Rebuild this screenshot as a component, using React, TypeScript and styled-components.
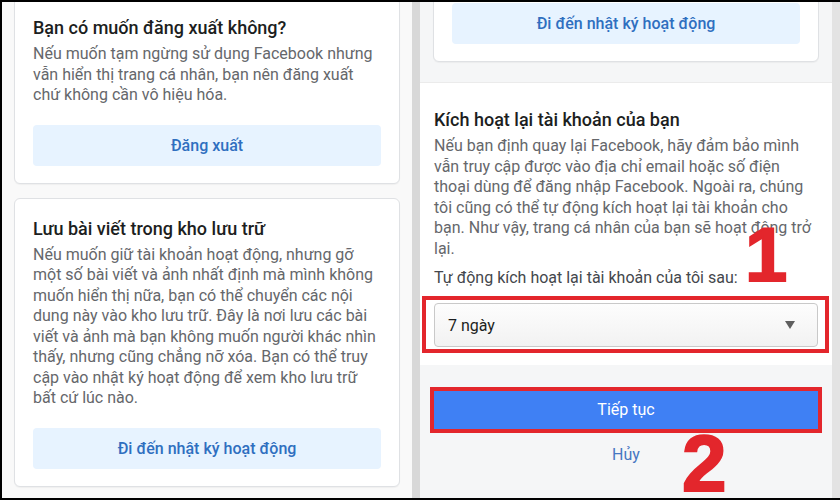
import React from 'react';
import styled, { createGlobalStyle } from 'styled-components';

const GlobalStyle = createGlobalStyle`
  html, body {
    margin: 0;
    padding: 0;
    background: #000;
  }
  body {
    font-family: Roboto, "Noto Sans", "Liberation Sans", sans-serif;
  }
`;

const Frame = styled.div`
  box-sizing: border-box;
  display: flex;
  width: 840px;
  height: 500px;
  overflow: hidden;
  border-top: 2px solid #000;
  border-bottom: 2px solid #000;
  border-left: 2px solid #000;
`;

const LeftPane = styled.div`
  display: flex;
  flex-direction: column;
  gap: 14px;
  width: 410px;
  padding: 0 12px;
  box-sizing: border-box;
  background: #f9f9f9;
  overflow: hidden;
`;

const Divider = styled.div`
  width: 8px;
  flex-shrink: 0;
  background: #d8d8d8;
`;

const RightPane = styled.div`
  position: relative;
  display: flex;
  flex-direction: column;
  width: 412px;
  flex-shrink: 0;
  background: #f5f6f7;
  overflow: hidden;
`;

const EdgeStrip = styled.div`
  flex: 1;
  background: #e3e3e3;
`;

const Card = styled.div<{ $offset?: number }>`
  flex-shrink: 0;
  margin-top: ${(p) => p.$offset ?? 0}px;
  padding: 18px 18px 17px;
  background: #fff;
  border: 1px solid #dfe1e4;
  border-radius: 6px;
  box-shadow: 0 1px 1px rgba(0, 0, 0, 0.04);
`;

const TopCard = styled(Card)`
  margin-left: 13px;
  margin-right: 13px;
`;

const Title = styled.div`
  font-size: 18px;
  line-height: 24px;
  font-weight: 500;
  color: #1c1e21;
  margin-bottom: 4px;
  white-space: nowrap;
`;

const Body = styled.div`
  font-size: 16px;
  line-height: 20.5px;
  color: #65676b;
  white-space: nowrap;
`;

const SoftButton = styled.div`
  display: flex;
  align-items: center;
  justify-content: center;
  height: 41px;
  margin-top: 19px;
  background: #e7f3ff;
  border-radius: 4px;
  font-size: 16px;
  font-weight: 500;
  color: #2f6fc0;
`;

const TopCardButton = styled(SoftButton)`
  margin-top: 0;
`;

const Section = styled.div`
  margin-top: 20px;
  padding: 25px 14px 18px;
  background: #fff;
  border-top: 1px solid #ebebeb;
`;

const Label = styled.div`
  margin-top: 9px;
  font-size: 16px;
  line-height: 20.5px;
  color: #44474c;
`;

const Highlight = styled.div<{ $inset: string }>`
  position: relative;

  &::after {
    content: '';
    position: absolute;
    inset: ${(p) => p.$inset};
    border: 4px solid #e3262c;
    pointer-events: none;
  }
`;

const SelectBox = styled.div`
  display: flex;
  align-items: center;
  justify-content: space-between;
  box-sizing: border-box;
  height: 44px;
  margin-top: 14.5px;
  padding: 0 22px 0 13px;
  background: linear-gradient(#fdfdfd, #f2f2f2);
  border: 1px solid #c9c9c9;
  border-radius: 4px;
  font-size: 16px;
  color: #1c1e21;
`;

const Caret = styled.span`
  width: 0;
  height: 0;
  border-left: 5px solid transparent;
  border-right: 5px solid transparent;
  border-top: 8px solid #5f5f5f;
`;

const Footer = styled.div`
  display: flex;
  flex-direction: column;
  padding: 24px 14px 0;
`;

const PrimaryButton = styled.div`
  display: flex;
  align-items: center;
  justify-content: center;
  height: 41px;
  background: #3f80f4;
  color: #fff;
  font-size: 16px;
`;

const CancelLink = styled.div`
  margin-top: 15px;
  text-align: center;
  font-size: 16px;
  line-height: 20px;
  color: #4677c2;
`;

const StepNumber = styled.span<{ $left: number; $top: number; $size: number }>`
  position: absolute;
  left: ${(p) => p.$left}px;
  top: ${(p) => p.$top}px;
  font-family: "Liberation Sans", Arial, sans-serif;
  font-weight: 700;
  font-size: ${(p) => p.$size}px;
  line-height: 1;
  color: #e3262c;
  -webkit-text-stroke: 2px #e3262c;
`;

const Lines = ({ lines }: { lines: string[] }) => (
  <Body>
    {lines.map((line, i) => (
      <React.Fragment key={i}>
        {line}
        {i < lines.length - 1 && <br />}
      </React.Fragment>
    ))}
  </Body>
);

export default function App() {
  return (
    <>
      <GlobalStyle />
      <Frame>
        <LeftPane>
          <Card $offset={-5}>
            <Title>Bạn có muốn đăng xuất không?</Title>
            <Lines
              lines={[
                'Nếu muốn tạm ngừng sử dụng Facebook nhưng',
                'vẫn hiển thị trang cá nhân, bạn nên đăng xuất',
                'chứ không cần vô hiệu hóa.',
              ]}
            />
            <SoftButton>Đăng xuất</SoftButton>
          </Card>
          <Card>
            <Title>Lưu bài viết trong kho lưu trữ</Title>
            <Lines
              lines={[
                'Nếu muốn giữ tài khoản hoạt động, nhưng gỡ',
                'một số bài viết và ảnh nhất định mà mình không',
                'muốn hiển thị nữa, bạn có thể chuyển các nội',
                'dung này vào kho lưu trữ. Đây là nơi lưu các bài',
                'viết và ảnh mà bạn không muốn người khác nhìn',
                'thấy, nhưng cũng chẳng nỡ xóa. Bạn có thể truy',
                'cập vào nhật ký hoạt động để xem kho lưu trữ',
                'bất cứ lúc nào.',
              ]}
            />
            <SoftButton>Đi đến nhật ký hoạt động</SoftButton>
          </Card>
        </LeftPane>
        <Divider />
        <RightPane>
          <TopCard $offset={-18}>
            <TopCardButton>Đi đến nhật ký hoạt động</TopCardButton>
          </TopCard>
          <Section>
            <Title>Kích hoạt lại tài khoản của bạn</Title>
            <Lines
              lines={[
                'Nếu bạn định quay lại Facebook, hãy đảm bảo mình',
                'vẫn truy cập được vào địa chỉ email hoặc số điện',
                'thoại dùng để đăng nhập Facebook. Ngoài ra, chúng',
                'tôi cũng có thể tự động kích hoạt lại tài khoản cho',
                'bạn. Như vậy, trang cá nhân của bạn sẽ hoạt động trở',
                'lại.',
              ]}
            />
            <Label>Tự động kích hoạt lại tài khoản của tôi sau:</Label>
            <Highlight $inset="-7px -11px -6px -12px">
              <SelectBox>
                <span>7 ngày</span>
                <Caret />
              </SelectBox>
            </Highlight>
          </Section>
          <Footer>
            <Highlight $inset="-2px -4px -3px -4px">
              <PrimaryButton>Tiếp tục</PrimaryButton>
            </Highlight>
            <CancelLink>Hủy</CancelLink>
          </Footer>
          <StepNumber $left={325} $top={215} $size={76}>1</StepNumber>
          <StepNumber $left={262} $top={422} $size={80}>2</StepNumber>
        </RightPane>
        <EdgeStrip />
      </Frame>
    </>
  );
}
